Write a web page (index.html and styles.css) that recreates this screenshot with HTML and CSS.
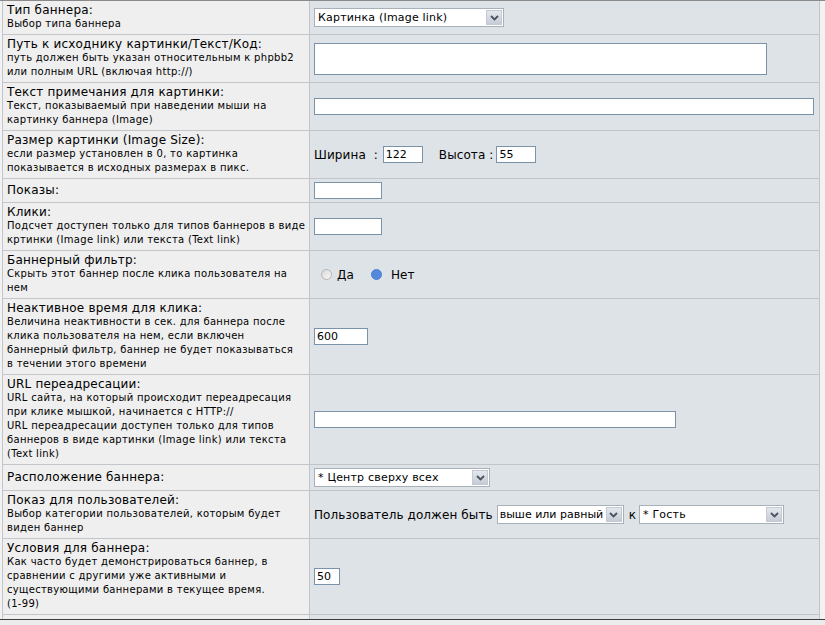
FILE: index.html
```html
<!DOCTYPE html>
<html lang="ru">
<head>
<meta charset="utf-8">
<title>Баннер</title>
<link rel="stylesheet" href="styles.css">
</head>
<body>
<div class="frame">
  <div class="form">
    <div class="lab"><div class="t">Тип баннера:</div><div class="d">Выбор типа баннера</div></div>
    <div class="val"><div class="sel w190"><span class="sv">Картинка (Image link)</span><span class="sb"><svg width="9" height="6" viewBox="0 0 9 6"><path d="M1 1 L4.5 4.5 L8 1" fill="none" stroke="#4a5260" stroke-width="1.8"/></svg></span></div></div>

    <div class="lab"><div class="t">Путь к исходнику картинки/Текст/Код:</div><div class="d">путь должен быть указан относительным к phpbb2<br>или полным URL (включая http://)</div></div>
    <div class="val"><div class="area"></div></div>

    <div class="lab"><div class="t">Текст примечания для картинки:</div><div class="d">Текст, показываемый при наведении мыши на<br>картинку баннера (Image)</div></div>
    <div class="val"><span class="inp w500"></span></div>

    <div class="lab"><div class="t">Размер картинки (Image Size):</div><div class="d">если размер установлен в 0, то картинка<br>показывается в исходных размерах в пикс.</div></div>
    <div class="val row"><span class="txt">Ширина&nbsp;&nbsp;:</span><span class="inp w40 ml5">122</span><span class="txt ml16">Высота :</span><span class="inp w40 ml3">55</span></div>

    <div class="lab"><div class="t">Показы:</div></div>
    <div class="val"><span class="inp w68"></span></div>

    <div class="lab"><div class="t">Клики:</div><div class="d">Подсчет доступен только для типов баннеров в виде<br>кртинки (Image link) или текста (Text link)</div></div>
    <div class="val"><span class="inp w68"></span></div>

    <div class="lab"><div class="t">Баннерный фильтр:</div><div class="d">Скрыть этот баннер после клика пользователя на<br>нем</div></div>
    <div class="val row radios"><span class="radio"></span><span class="txt rl">Да</span><span class="radio on"></span><span class="txt rl2">Нет</span></div>

    <div class="lab"><div class="t">Неактивное время для клика:</div><div class="d">Величина неактивности в сек. для баннера после<br>клика пользователя на нем, если включен<br>баннерный фильтр, баннер не будет показываться<br>в течении этого времени</div></div>
    <div class="val"><span class="inp w54">600</span></div>

    <div class="lab"><div class="t">URL переадресации:</div><div class="d">URL сайта, на который происходит переадресация<br>при клике мышкой, начинается с HTTP://<br>URL переадресации доступен только для типов<br>баннеров в виде картинки (Image link) или текста<br>(Text link)</div></div>
    <div class="val"><span class="inp w362"></span></div>

    <div class="lab"><div class="t">Расположение баннера:</div></div>
    <div class="val"><div class="sel w176"><span class="sv">* Центр сверху всех</span><span class="sb"><svg width="9" height="6" viewBox="0 0 9 6"><path d="M1 1 L4.5 4.5 L8 1" fill="none" stroke="#4a5260" stroke-width="1.8"/></svg></span></div></div>

    <div class="lab"><div class="t">Показ для пользователей:</div><div class="d">Выбор категории пользователей, которым будет<br>виден баннер</div></div>
    <div class="val row"><span class="txt">Пользователь должен быть</span><div class="sel w127 ml4"><span class="sv tight">выше или равный</span><span class="sb"><svg width="9" height="6" viewBox="0 0 9 6"><path d="M1 1 L4.5 4.5 L8 1" fill="none" stroke="#4a5260" stroke-width="1.8"/></svg></span></div><span class="txt ml5">к</span><div class="sel w145 ml3"><span class="sv">* Гость</span><span class="sb"><svg width="9" height="6" viewBox="0 0 9 6"><path d="M1 1 L4.5 4.5 L8 1" fill="none" stroke="#4a5260" stroke-width="1.8"/></svg></span></div></div>

    <div class="lab"><div class="t">Условия для баннера:</div><div class="d">Как часто будет демонстрироваться баннер, в<br>сравнении с другими уже активными и<br>существующими баннерами в текущее время.<br>(1-99)</div></div>
    <div class="val"><span class="inp w26">50</span></div>

    <div class="lab lab-top"><div class="t">Время показа:</div><div class="d">&nbsp;</div></div>
    <div class="val"></div>
  </div>
</div>
</body>
</html>
```
FILE: styles.css
```css
html, body {
  margin: 0;
  padding: 0;
}
body {
  background: #ececec;
  font-family: "DejaVu Sans", Verdana, sans-serif;
  color: #000;
}
.frame {
  height: 620px;
  overflow: hidden;
  border-top: 1px solid #8a8a8a;
  border-bottom: 1px solid #3c3c3c;
  box-sizing: border-box;
  padding-left: 2px;
  background: #f2f2f2;
}
.form {
  width: 818px;
  display: grid;
  grid-template-columns: 306px 509px;
  gap: 1px;
  padding: 0 1px 1px 1px;
  background: #c2c6ca;
  box-sizing: border-box;
}
.lab {
  background: #efefef;
  padding: 3px 4px;
  display: flex;
  flex-direction: column;
  justify-content: center;
}
.lab-top { justify-content: flex-start; }
.val {
  background: #dee3e7;
  padding: 3px 4px;
  display: flex;
  align-items: center;
}
.row { flex-wrap: nowrap; }
.t {
  font-size: 12px;
  line-height: 13px;
  letter-spacing: 0.2px;
  white-space: nowrap;
}
.d {
  font-size: 10px;
  line-height: 14px;
  letter-spacing: 0.3px;
  white-space: nowrap;
}
.txt {
  font-size: 12px;
  line-height: 14px;
  letter-spacing: 0.1px;
  white-space: nowrap;
}
.inp {
  display: inline-block;
  box-sizing: border-box;
  height: 17px;
  border: 1px solid #7b93a8;
  background: #fff;
  font-size: 11px;
  line-height: 15px;
  padding: 0 2px;
}
.area {
  box-sizing: border-box;
  width: 453px;
  height: 32px;
  border: 1px solid #7b93a8;
  background: #fff;
}
.w500 { width: 500px; }
.w40 { width: 40px; }
.w68 { width: 68px; }
.w54 { width: 54px; }
.w362 { width: 362px; }
.w26 { width: 26px; }
.ml3 { margin-left: 3px; }
.ml4 { margin-left: 4px; }
.ml5 { margin-left: 5px; }
.ml16 { margin-left: 16px; }
.sel {
  box-sizing: border-box;
  display: inline-flex;
  align-items: stretch;
  height: 19px;
  border: 1px solid #a9b1b8;
  background: #fff;
}
.w190 { width: 190px; }
.w176 { width: 176px; }
.w127 { width: 127px; }
.w145 { width: 145px; }
.sv {
  flex: 1;
  font-size: 11px;
  line-height: 17px;
  letter-spacing: 0.2px;
  padding-left: 3px;
  white-space: nowrap;
  overflow: hidden;
}
.sv.tight {
  letter-spacing: 0;
  padding-left: 2px;
}
.sb {
  width: 16px;
  margin: 1px;
  box-sizing: border-box;
  border: 1px solid #c3cad3;
  background: linear-gradient(#e4e8ee, #c6ccd6);
  display: flex;
  align-items: center;
  justify-content: center;
}
.radios { padding-left: 11px; }
.radio {
  box-sizing: border-box;
  width: 11px;
  height: 11px;
  border-radius: 50%;
  border: 1px solid #b4b4b4;
  background: linear-gradient(135deg, #d8d8d8, #f8f8f8);
}
.radio.on {
  border: 1px solid #4c80d4;
  background: #5589dc;
  margin-left: 17px;
}
.rl { margin-left: 5px; }
.rl2 { margin-left: 9px; }
```
